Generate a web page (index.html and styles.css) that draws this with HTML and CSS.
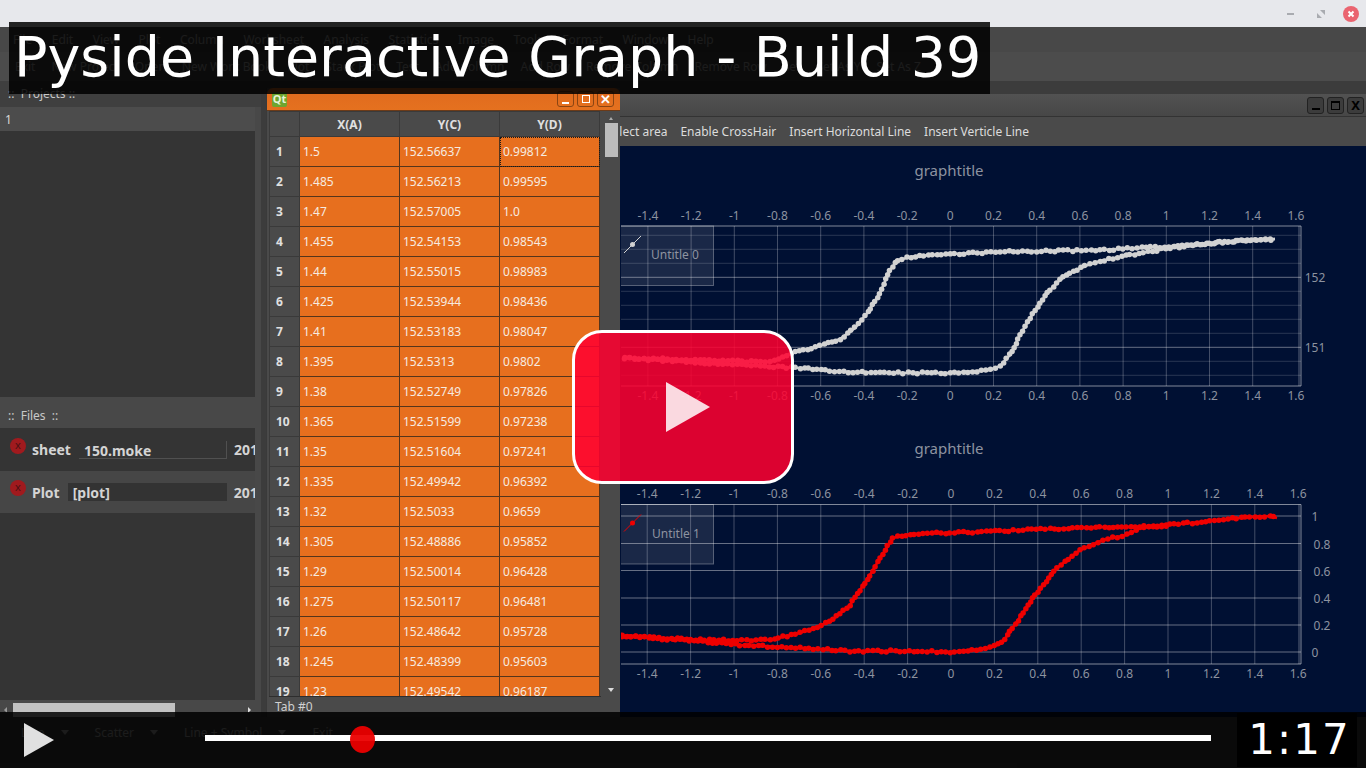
FILE: index.html
```html
<!DOCTYPE html>
<html lang="en">
<head>
    <meta charset="UTF-8">
    <title>Pyside Interactive Graph - Build 39</title>
    <link rel="stylesheet" href="styles.css">
</head>
<body>
    <div class="app">
        <div class="titlebar">
            <span class="tb-min"></span>
            <svg class="tb-restore" width="8" height="8" viewBox="0 0 8 8"><path d="M3 0h5v5zM0 3l5 5H0z" fill="#a9abb0"/></svg>
            <svg class="tb-close" width="16" height="16" viewBox="0 0 16 16"><circle cx="8" cy="8" r="8" fill="#ea6470"/><path d="M5.5 5.5l5 5M10.5 5.5l-5 5" stroke="#fff" stroke-width="2"/></svg>
        </div>

        <div class="menubar">
            <span>File</span><span>Edit</span><span>View</span><span>Plot</span><span>Column</span><span>Worksheet</span><span>Analysis</span><span>Statistics</span><span>Image</span><span>Tools</span><span>Format</span><span>Window</span><span>Help</span>
        </div>

        <div class="toolbar">
            <span>Exit</span><span>New Project</span><span>Open</span><span>New Work Book</span><span>Plot</span><span>Stack Plot</span><span>Test</span><span>Add Column</span><span>Add Row</span><span>Remove Column</span><span>Remove Row</span><span>Set</span><span>Set As Y</span><span>Set As Z</span>
        </div>

        <div class="main">
            <aside class="docks">
                <div class="dock-title dock-title-projects">::&nbsp; Projects ::</div>
                <div class="project-list">
                    <div class="project-row">1</div>
                </div>
                <div class="dock-title dock-title-files">::&nbsp; Files &nbsp;::</div>
                <div class="file-list">
                    <div class="file-row">
                        <span class="file-x">x</span>
                        <b class="file-kind">sheet</b>
                        <span class="file-name file-name-sheet">150.moke</span>
                        <b class="file-date">201</b>
                    </div>
                    <div class="file-row file-row-alt">
                        <span class="file-x">x</span>
                        <b class="file-kind">Plot</b>
                        <span class="file-name file-name-plot">[plot]</span>
                        <b class="file-date">201</b>
                    </div>
                </div>
                <div class="hscroll">
                    <span class="hscroll-left"></span>
                    <span class="hscroll-handle"></span>
                    <span class="hscroll-right"></span>
                </div>
            </aside>

            <div class="mdi">
                <section class="plot-window">
                    <div class="win-title">
                        <span class="win-btn"><i class="glyph-min"></i></span>
                        <span class="win-btn"><i class="glyph-max"></i></span>
                        <span class="win-btn glyph-x">X</span>
                    </div>
                    <div class="plot-menu">
                        <span>Select area</span><span>Enable CrossHair</span><span>Insert Horizontal Line</span><span>Insert Verticle Line</span>
                    </div>
                    <div class="plot-canvas">
                        <svg id="plots" class="plots" viewBox="621 146 745 570"></svg>
                    </div>
                </section>

                <section class="table-window">
                    <div class="qt-title">
                        <span class="qt-logo">Qt</span>
                        <span class="qt-btn"><i class="glyph-min"></i></span>
                        <span class="qt-btn"><i class="glyph-max"></i></span>
                        <span class="qt-btn glyph-x">✕</span>
                    </div>
                    <div class="table-area">
                        <div class="table-clip">
                            <table class="sheet">
                                <thead>
                                    <tr><th class="corner"></th><th>X(A)</th><th>Y(C)</th><th>Y(D)</th></tr>
                                </thead>
                                <tbody>
                                    <tr><th>1</th><td>1.5</td><td>152.56637</td><td class="current">0.99812</td></tr>
                                    <tr><th>2</th><td>1.485</td><td>152.56213</td><td>0.99595</td></tr>
                                    <tr><th>3</th><td>1.47</td><td>152.57005</td><td>1.0</td></tr>
                                    <tr><th>4</th><td>1.455</td><td>152.54153</td><td>0.98543</td></tr>
                                    <tr><th>5</th><td>1.44</td><td>152.55015</td><td>0.98983</td></tr>
                                    <tr><th>6</th><td>1.425</td><td>152.53944</td><td>0.98436</td></tr>
                                    <tr><th>7</th><td>1.41</td><td>152.53183</td><td>0.98047</td></tr>
                                    <tr><th>8</th><td>1.395</td><td>152.5313</td><td>0.9802</td></tr>
                                    <tr><th>9</th><td>1.38</td><td>152.52749</td><td>0.97826</td></tr>
                                    <tr><th>10</th><td>1.365</td><td>152.51599</td><td>0.97238</td></tr>
                                    <tr><th>11</th><td>1.35</td><td>152.51604</td><td>0.97241</td></tr>
                                    <tr><th>12</th><td>1.335</td><td>152.49942</td><td>0.96392</td></tr>
                                    <tr><th>13</th><td>1.32</td><td>152.5033</td><td>0.9659</td></tr>
                                    <tr><th>14</th><td>1.305</td><td>152.48886</td><td>0.95852</td></tr>
                                    <tr><th>15</th><td>1.29</td><td>152.50014</td><td>0.96428</td></tr>
                                    <tr><th>16</th><td>1.275</td><td>152.50117</td><td>0.96481</td></tr>
                                    <tr><th>17</th><td>1.26</td><td>152.48642</td><td>0.95728</td></tr>
                                    <tr><th>18</th><td>1.245</td><td>152.48399</td><td>0.95603</td></tr>
                                    <tr><th>19</th><td>1.23</td><td>152.49542</td><td>0.96187</td></tr>
                                </tbody>
                            </table>
                        </div>
                        <div class="vscroll">
                            <span class="arrow-up"></span>
                            <span class="vscroll-handle"></span>
                            <span class="arrow-down"></span>
                        </div>
                    </div>
                    <div class="tab-label">Tab #0</div>
                </section>
            </div>
        </div>

        <div class="bottombar">
            <span>Line</span><i class="drop"></i>
            <span>Scatter</span><i class="drop"></i>
            <span>Line + Symbol</span><i class="drop"></i>
            <span>Exit</span>
        </div>
    </div>

    <!-- video player chrome laid over the recording -->
    <div class="video-title">Pyside Interactive Graph - Build 39</div>
    <div class="big-play"><span class="big-play-arrow"></span></div>
    <div class="controls">
        <span class="ctl-play"></span>
        <div class="progress"><span class="knob"></span></div>
        <div class="time">1:17</div>
    </div>

    <script src="plot.js"></script>
</body>
</html>
```

FILE: styles.css
```css
* {
    box-sizing: border-box;
}

html, body {
    margin: 0;
    padding: 0;
    width: 1366px;
    height: 768px;
    overflow: hidden;
}

body {
    position: relative;
    font-family: "Noto Sans", sans-serif;
    font-size: 12px;
    background-color: #3c3c3c;
    color: #d8d8d8;
}

.app {
    display: flex;
    flex-direction: column;
    height: 768px;
}

/* window manager title */
.titlebar {
    height: 27px;
    flex: none;
    display: flex;
    align-items: center;
    justify-content: flex-end;
    padding-right: 7px;
    background-color: #e7e8ec;
}

.tb-min {
    width: 7px;
    height: 2px;
    background-color: #a9abb0;
    margin-right: 23px;
}

.tb-restore {
    margin-right: 18px;
}

/* menu and tool bars */
.menubar {
    height: 25px;
    flex: none;
    display: flex;
    align-items: center;
    gap: 19.5px;
    padding-left: 13px;
    background-color: #484848;
    color: #b8b8b8;
}

.toolbar {
    height: 29px;
    flex: none;
    display: flex;
    align-items: center;
    gap: 16px;
    padding-left: 15px;
    background-color: #4c4c4c;
    color: #b8b8b8;
}

.main {
    height: 636px;
    flex: none;
    display: flex;
}

.bottombar {
    flex: 1;
    display: flex;
    align-items: center;
    padding: 0 0 20px 21px;
    background-color: #484848;
    color: #b8b8b8;
}

.drop {
    width: 0;
    height: 0;
    margin: 0 26px 0 16px;
    border-left: 4px solid transparent;
    border-right: 4px solid transparent;
    border-top: 5px solid #b8b8b8;
}

/* left docks */
.docks {
    width: 262px;
    flex: none;
    display: flex;
    flex-direction: column;
    background-color: #484848;
    border-right: 1px solid #3c3c3c;
}

.dock-title {
    display: flex;
    align-items: center;
    padding-left: 8px;
    color: #c8c8c8;
}

.dock-title-projects {
    height: 26px;
    padding-bottom: 2px;
    background-color: #3f3f3f;
}

.dock-title-files {
    height: 31px;
    padding-top: 6px;
}

.project-list {
    width: 255px;
    height: 290px;
    background-color: #343434;
}

.project-row {
    height: 24px;
    line-height: 25px;
    padding-left: 5px;
    background-color: #4c4c4c;
}

.file-list {
    width: 255px;
    height: 272px;
    overflow: hidden;
    background-color: #343434;
}

.file-row {
    height: 43px;
    display: flex;
    align-items: center;
    white-space: nowrap;
    padding-left: 10px;
    font-size: 14px;
}

.file-row-alt {
    height: 42px;
    background-color: #464646;
}

.file-x {
    width: 16px;
    height: 16px;
    margin: -8px 6px 0 0;
    flex: none;
    border-radius: 50%;
    background-color: #a01a1e;
    color: #4c1012;
    font-size: 11px;
    line-height: 14px;
    text-align: center;
}

.file-kind {
    color: #d4d4d4;
}

.file-name {
    height: 18px;
    line-height: 20px;
    font-weight: bold;
    color: #d4d4d4;
    padding-left: 5px;
    margin-right: 7px;
    flex: none;
}

.file-name-sheet {
    width: 148px;
    margin-left: 8px;
    border-bottom: 1px solid #505050;
    border-right: 1px solid #505050;
}

.file-name-plot {
    width: 159px;
    margin-left: 8px;
    background-color: #333;
}

.file-date {
    color: #d4d4d4;
}

.hscroll {
    height: 14px;
    width: 255px;
    margin-top: 3px;
    display: flex;
    align-items: center;
    justify-content: space-between;
    padding: 0 4px;
    background-color: #484848;
}

.hscroll-handle {
    width: 162px;
    height: 14px;
    margin-right: auto;
    margin-left: 6px;
    background-color: #c2c2c2;
}

.hscroll-left,
.hscroll-right {
    width: 0;
    height: 0;
    border-top: 3px solid transparent;
    border-bottom: 3px solid transparent;
}

.hscroll-left {
    border-right: 3px solid #999;
}

.hscroll-right {
    border-left: 3px solid #ddd;
}

/* workspace with the two sub windows */
.mdi {
    flex: 1;
    position: relative;
    background-color: #3c3c3c;
}

.plot-window {
    position: absolute;
    left: 328px;
    top: 13px;
    right: 0;
    bottom: 0;
    display: flex;
    flex-direction: column;
    background-color: #484848;
}

.win-title {
    height: 23px;
    flex: none;
    display: flex;
    justify-content: flex-end;
    gap: 3px;
    padding: 3px 2px 0 0;
    background: linear-gradient(#525252, #474747);
    border-bottom: 1px solid #333;
}

.win-btn {
    width: 17px;
    height: 17px;
    display: flex;
    align-items: center;
    justify-content: center;
    border: 1px solid #222;
    border-radius: 3px;
    background-color: #3c3c3c;
    color: #000;
}

.win-btn .glyph-min {
    display: block;
    width: 8px;
    height: 2px;
    margin-top: 6px;
    background-color: #000;
}

.win-btn .glyph-max {
    display: block;
    width: 9px;
    height: 9px;
    border: 1px solid #000;
    border-top-width: 2px;
}

.glyph-x {
    font-weight: bold;
    font-size: 13px;
    line-height: 1;
}

.plot-menu {
    height: 29px;
    flex: none;
    display: flex;
    align-items: center;
    gap: 13px;
    padding-left: 16px;
    background-color: #4a4a4a;
    color: #dcdcdc;
}

.plot-canvas {
    flex: 1;
    padding-left: 31px;
    background-color: #001033;
    overflow: hidden;
}

.plots {
    display: block;
    width: 745px;
    height: 570px;
}

.plots text {
    font-family: "Noto Sans", sans-serif;
    font-size: 12px;
    fill: #8d93a0;
    text-anchor: middle;
}

.plots .plot-title {
    font-size: 15px;
}

.plots .legend-text {
    text-anchor: start;
}

/* worksheet window */
.table-window {
    position: absolute;
    left: 4px;
    top: 7px;
    width: 354px;
    bottom: 0;
    display: flex;
    flex-direction: column;
    background-color: #4a4a4a;
    border-left: 1px solid #3a3a3a;
}

.qt-title {
    height: 23px;
    flex: none;
    display: flex;
    align-items: center;
    gap: 3px;
    padding: 0 6px 0 5px;
    border-radius: 6px 6px 0 0;
    background: linear-gradient(#e06a1e, #e5711f);
    border-bottom: 1px solid #6b3a18;
}

.qt-logo {
    width: 15px;
    height: 15px;
    margin-right: auto;
    border-radius: 2px;
    background-color: #6fa52f;
    color: #e8f4d8;
    font-size: 11px;
    font-weight: bold;
    line-height: 14px;
    text-align: center;
}

.qt-btn {
    width: 17px;
    height: 16px;
    display: flex;
    align-items: center;
    justify-content: center;
    border: 1px solid #8a4513;
    border-radius: 3px;
    color: #fff;
}

.qt-btn .glyph-min {
    display: block;
    width: 7px;
    height: 2px;
    margin-top: 7px;
    background-color: #fff;
}

.qt-btn .glyph-max {
    display: block;
    width: 8px;
    height: 8px;
    border: 1px solid #fff;
}

.table-area {
    height: 586px;
    flex: none;
    display: flex;
    padding-left: 2px;
}

.table-clip {
    width: 332px;
    height: 586px;
    overflow: hidden;
    border-bottom: 1px solid #2e2e2e;
}

.sheet {
    width: 331px;
    table-layout: fixed;
    border-collapse: collapse;
}

.sheet th {
    height: 30px;
    font-size: 12px;
    font-weight: bold;
    color: #e0e0e0;
    background-color: #4a4a4a;
    border: 1px solid #3a3a3a;
    padding: 0;
}

.sheet thead th {
    height: 25px;
    width: 100px;
}

.sheet .corner {
    width: 30px;
}

.sheet tbody th {
    text-align: left;
    padding-left: 6px;
}

.sheet td {
    height: 30px;
    padding: 0 3px;
    background-color: #e76f1e;
    border: 1px solid #55351c;
    color: #f6ebe0;
    font-size: 12px;
}

.sheet td.current {
    outline: 1px dotted #1a1a1a;
    outline-offset: -1px;
}

.vscroll {
    width: 19px;
    flex: none;
    display: flex;
    flex-direction: column;
    align-items: center;
    padding-top: 6px;
}

.vscroll-handle {
    width: 13px;
    height: 34px;
    margin: 3px 0 0 1px;
    background-color: #bcbcbc;
}

.arrow-up {
    width: 0;
    height: 0;
    border-left: 2px solid transparent;
    border-right: 2px solid transparent;
    border-bottom: 3px solid #aaa;
}

.arrow-down {
    width: 0;
    height: 0;
    margin-top: auto;
    margin-bottom: 5px;
    border-left: 3px solid transparent;
    border-right: 3px solid transparent;
    border-top: 4px solid #ddd;
}

.tab-label {
    padding: 1px 0 0 8px;
    color: #d0d0d0;
}

/* player chrome */
.video-title {
    position: absolute;
    left: 9px;
    top: 22px;
    width: 981px;
    height: 72px;
    padding-left: 5px;
    background-color: rgba(0, 0, 0, 0.85);
    color: #fff;
    font-family: "DejaVu Sans", sans-serif;
    font-size: 55.5px;
    line-height: 69px;
    white-space: nowrap;
}

.big-play {
    position: absolute;
    left: 572px;
    top: 330px;
    width: 222px;
    height: 154px;
    display: flex;
    align-items: center;
    justify-content: center;
    border: 3px solid #fff;
    border-radius: 30px;
    background-color: rgba(255, 0, 48, 0.863);
}

.big-play-arrow {
    width: 0;
    height: 0;
    margin-left: 10px;
    border-top: 25px solid transparent;
    border-bottom: 25px solid transparent;
    border-left: 44px solid rgba(255, 255, 255, 0.85);
}

.controls {
    position: absolute;
    left: 0;
    right: 0;
    top: 712px;
    height: 56px;
    background-color: rgba(0, 0, 0, 0.85);
}

.ctl-play {
    position: absolute;
    left: 24px;
    top: 11px;
    width: 0;
    height: 0;
    border-top: 17px solid transparent;
    border-bottom: 17px solid transparent;
    border-left: 30px solid #e0e0e0;
}

.progress {
    position: absolute;
    left: 205px;
    top: 23px;
    width: 1006px;
    height: 6px;
    background-color: #fff;
}

.knob {
    position: absolute;
    left: 145px;
    top: -9px;
    width: 25px;
    height: 27px;
    border-radius: 50%;
    background-color: rgba(235, 0, 0, 0.95);
}

.time {
    position: absolute;
    left: 1237px;
    top: 1px;
    width: 120px;
    height: 54px;
    padding-left: 5px;
    background-color: #000;
    color: #fff;
    font-family: "DejaVu Sans", sans-serif;
    font-size: 42px;
    line-height: 54px;
    letter-spacing: 2px;
    text-align: center;
}
```

FILE: plot.js
```js
// draws both graphs; svg coordinates are the same as the window's pixels
var svgNS = "http://www.w3.org/2000/svg";
var svg = document.getElementById("plots");

function add(tag, attrs, text) {
    var el = document.createElementNS(svgNS, tag);
    for (var k in attrs) el.setAttribute(k, attrs[k]);
    if (text !== undefined) el.textContent = text;
    svg.appendChild(el);
    return el;
}

function hline(y, x1, x2, op) {
    add("line", { x1: x1, x2: x2, y1: y, y2: y, stroke: "#fff", "stroke-opacity": op });
}

function vline(x, y1, y2, op) {
    add("line", { x1: x, x2: x, y1: y1, y2: y2, stroke: "#fff", "stroke-opacity": op });
}

var labels = ["-1.4", "-1.2", "-1", "-0.8", "-0.6", "-0.4", "-0.2", "0", "0.2", "0.4", "0.6", "0.8", "1", "1.2", "1.4", "1.6"];

// small repeatable noise so curves look like measured points
var seed = 7;
function noise() {
    seed = (seed * 16807) % 2147483647;
    return seed / 2147483647 - 0.5;
}

function curve(points, color, size) {
    var line = points.map(function (p) { return p.join(","); }).join(" ");
    add("polyline", { points: line, fill: "none", stroke: color, "stroke-width": size - 3 });
    for (var i = 0; i < points.length - 1; i++) {
        var a = points[i], b = points[i + 1];
        var len = Math.sqrt(Math.pow(b[0] - a[0], 2) + Math.pow(b[1] - a[1], 2));
        var n = Math.max(1, Math.round(len / 4.6));
        for (var j = 0; j < n; j++) {
            var t = j / n;
            add("circle", {
                cx: a[0] + (b[0] - a[0]) * t + noise() * 1.2,
                cy: a[1] + (b[1] - a[1]) * t + noise() * 2,
                r: size / 2,
                fill: color
            });
        }
    }
}

function plot(o) {
    add("text", { x: 949, y: o.top - 50.5, class: "plot-title" }, "graphtitle");

    for (var i = 0; i < labels.length; i++) {
        var x = o.x0 + o.xs * parseFloat(labels[i]);
        if (i < labels.length - 1) vline(x, o.top, o.bottom, 0.26);
        add("text", { x: x, y: o.top - 6.5 }, labels[i]);
        add("text", { x: x, y: o.bottom + 13.5 }, labels[i]);
    }

    o.minor.forEach(function (y) { hline(y, 621, o.right, 0.16); });
    o.major.forEach(function (m) {
        hline(m[0], 621, o.right, 0.4);
        add("text", { x: o.right + m[2], y: m[0] + 5 }, m[1]);
    });

    // frame
    hline(o.top, 621, o.right, 0.5);
    hline(o.bottom, 621, o.right, 0.5);
    vline(o.right, o.top, o.bottom, 0.5);
    vline(o.right - 2, o.top, o.bottom, 0.35);

    // legend
    add("rect", { x: 615, y: o.top, width: 98.5, height: 59.5, fill: "#fff", "fill-opacity": 0.1, stroke: "#fff", "stroke-opacity": 0.3 });
    add("line", { x1: 624, y1: o.top + 27, x2: 641, y2: o.top + 10, stroke: o.color });
    add("circle", { cx: 632.5, cy: o.top + 18.5, r: 2.5, fill: o.color });
    add("text", { x: o.legendX, y: o.top + 33, class: "legend-text" }, o.legend);

    curve(o.up, o.color, o.size);
    curve(o.down, o.color, o.size);
}

plot({
    top: 226, bottom: 386, right: 1301, x0: 950.3, xs: 216,
    color: "#d2d2d2", size: 5.5, legend: "Untitle 0", legendX: 651,
    minor: [235.3, 249.3, 263.3, 291.3, 305.3, 319.3, 333.3, 361.3, 375.3],
    major: [[277.3, "152", 14], [347.3, "151", 14]],
    up: [[625, 358], [700, 360], [770, 362], [795, 352], [820, 346], [840, 339], [855, 328], [868, 312], [880, 293], [890, 270], [898, 260], [915, 256], [950, 254], [1000, 252], [1050, 251], [1100, 250], [1160, 247], [1200, 244], [1250, 240], [1275, 239]],
    down: [[625, 358], [700, 363], [760, 366], [800, 368], [830, 371], [880, 373], [950, 373], [990, 370], [1000, 366], [1010, 355], [1020, 335], [1030, 318], [1040, 303], [1050, 290], [1060, 280], [1070, 273], [1085, 266], [1100, 261], [1130, 255], [1170, 248], [1220, 242], [1275, 239]]
});

plot({
    top: 504.5, bottom: 664, right: 1301, x0: 951, xs: 217,
    color: "#ee0000", size: 5.5, legend: "Untitle 1", legendX: 652,
    minor: [],
    major: [[516, "1", 14], [543.5, "0.8", 21], [570.5, "0.6", 21], [598, "0.4", 21], [625, "0.2", 21], [652, "0", 14]],
    up: [[622, 636], [700, 640], [770, 640], [800, 633], [830, 622], [850, 605], [870, 575], [880, 558], [893, 538], [910, 534], [950, 533], [1000, 531], [1050, 529], [1100, 527], [1140, 527], [1170, 525], [1210, 521], [1250, 517], [1270, 516], [1277, 518]],
    down: [[622, 636], [680, 640], [740, 645], [800, 648], [850, 651], [900, 651], [950, 652], [990, 648], [1002, 643], [1018, 620], [1035, 595], [1057, 568], [1080, 550], [1103, 540], [1127, 535], [1140, 528], [1170, 525]]
});
```
